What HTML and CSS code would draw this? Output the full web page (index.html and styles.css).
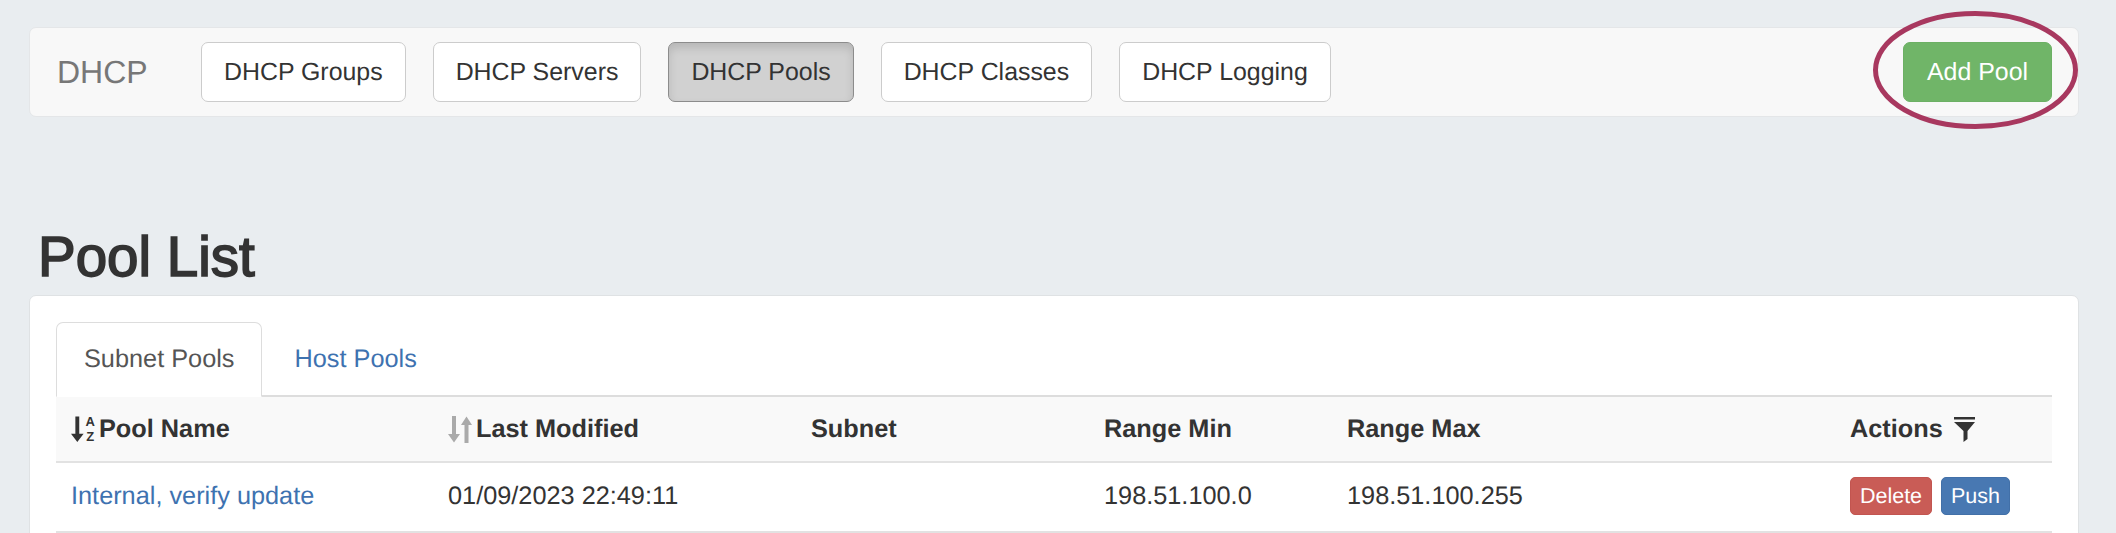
FILE: index.html
```html
<!DOCTYPE html>
<html lang="en">
<head>
    <meta charset="UTF-8">
    <title>DHCP Pools</title>
    <link rel="stylesheet" href="styles.css">
</head>
<body>
    <div class="page">
        <!-- Top nav panel -->
        <nav class="top-panel">
            <span class="panel-label">DHCP</span>
            <div class="panel-buttons">
                <a class="btn">DHCP Groups</a>
                <a class="btn">DHCP Servers</a>
                <a class="btn active">DHCP Pools</a>
                <a class="btn">DHCP Classes</a>
                <a class="btn">DHCP Logging</a>
            </div>
            <div class="add-wrap">
                <a class="btn btn-green">Add Pool</a>
                <svg class="highlight" width="209" height="122" viewBox="0 0 209 122">
                    <ellipse cx="104.5" cy="59" rx="100" ry="56.5" fill="none" stroke="#a8385f" stroke-width="5"/>
                </svg>
            </div>
        </nav>

        <h1 class="page-title">Pool List</h1>

        <section class="card">
            <ul class="tabs">
                <li class="tab current">Subnet Pools</li>
                <li class="tab">Host Pools</li>
            </ul>
            <table class="pool-table">
                <colgroup>
                    <col class="col-name">
                    <col class="col-modified">
                    <col class="col-subnet">
                    <col class="col-min">
                    <col class="col-max">
                    <col class="col-actions">
                </colgroup>
                <thead>
                    <tr>
                        <th>
                            <span class="th-inner">
                                <span class="sort-icon">
                                    <svg width="13" height="27" viewBox="0 0 13 27">
                                        <path d="M4.500 0h4v18h4.500l-6.500 8.500L0 18h4.500z" fill="#333"/>
                                    </svg>
                                    <span class="sort-letters">
                                        <span>A</span>
                                        <span>Z</span>
                                    </span>
                                </span>
                                Pool Name
                            </span>
                        </th>
                        <th>
                            <span class="th-inner">
                                <svg width="24" height="27" viewBox="0 0 24 27">
                                    <path d="M4 0h4v18h4l-6 8.500L0 18h4z" fill="#aaa"/>
                                    <path d="M16.500 27V9H13l5.500-8.500L24 9h-3.500v18z" fill="#aaa"/>
                                </svg>
                                Last Modified
                            </span>
                        </th>
                        <th>Subnet</th>
                        <th>Range Min</th>
                        <th>Range Max</th>
                        <th>
                            <span class="th-inner th-actions">
                                Actions
                                <svg width="21" height="25" viewBox="0 0 21 25">
                                    <path d="M0 0h21v2.500H0z" fill="#333"/>
                                    <path d="M0 5h21l-7.500 9v8l-4 3V14z" fill="#333"/>
                                </svg>
                            </span>
                        </th>
                    </tr>
                </thead>
                <tbody>
                    <tr>
                        <td><a class="link">Internal, verify update</a></td>
                        <td>01/09/2023 22:49:11</td>
                        <td></td>
                        <td>198.51.100.0</td>
                        <td>198.51.100.255</td>
                        <td>
                            <div class="row-actions">
                                <a class="btn-small btn-red">Delete</a>
                                <a class="btn-small btn-blue">Push</a>
                            </div>
                        </td>
                    </tr>
                </tbody>
            </table>
        </section>
    </div>
</body>
</html>
```

FILE: styles.css
```css
/* Reset */
* {
    margin: 0;
    padding: 0;
    box-sizing: border-box;
}

html, body {
    height: 100%;
    overflow: hidden;
}

body {
    background: #e9edf0;
    color: #333;
    font-family: "Liberation Sans", Arial, sans-serif;
    font-size: 25.3px;
    text-rendering: geometricPrecision;
}

.page {
    padding: 27px 37px 0 29px;
}

/* Top panel */
.top-panel {
    display: flex;
    align-items: center;
    height: 90px;
    padding: 0 26px 0 27px;
    background: #f8f8f8;
    border: 1px solid #e4e6e8;
    border-radius: 7px;
}

.panel-label {
    width: 144px;
    font-size: 32px;
    color: #777;
}

.panel-buttons {
    display: flex;
    gap: 27px;
}

.btn {
    display: flex;
    align-items: center;
    justify-content: center;
    height: 60px;
    padding: 0 22px;
    background: #fff;
    border: 1px solid #ccc;
    border-radius: 7px;
    font-size: 24.9px;
    white-space: nowrap;
}

.btn.active {
    background: #d1d1d1;
    border-color: #8c8c8c;
    box-shadow: inset 0 5px 8px rgba(0, 0, 0, 0.125);
}

.btn-green {
    width: 149px;
    background: #70b568;
    border-color: #6cb064;
    color: #fff;
}

.add-wrap {
    position: relative;
    margin-left: auto;
}

/* Hand drawn circle round the button */
.highlight {
    position: absolute;
    left: -32px;
    top: -31px;
}

/* Title */
.page-title {
    margin: 110px 0 0 9px;
    height: 68px;
    line-height: 60px;
    font-size: 56.5px;
    font-weight: normal;
    -webkit-text-stroke: 1.7px #333;
}

/* Card */
.card {
    height: 400px;
    padding: 26px;
    background: #fff;
    border: 1px solid #dfe2e4;
    border-radius: 7px;
}

.tabs {
    display: flex;
    gap: 4px;
    height: 75px;
    list-style: none;
    border-bottom: 2px solid #ddd;
}

.tab {
    display: flex;
    align-items: center;
    height: 75px;
    padding: 0 27px;
    border: 1px solid transparent;
    border-radius: 7px 7px 0 0;
    color: #3e72b0;
}

.tab.current {
    background: #fff;
    border-color: #ddd #ddd #fff;
    color: #555;
}

/* Table */
.pool-table {
    width: 100%;
    table-layout: fixed;
    border-collapse: collapse;
}

.col-name { width: 377px; }
.col-modified { width: 363px; }
.col-subnet { width: 293px; }
.col-min { width: 243px; }
.col-max { width: 503px; }
.col-actions { width: 217px; }

.pool-table th {
    height: 65px;
    padding: 0 15px;
    background: #f9f9f9;
    border-bottom: 2px solid #e2e2e2;
    font-weight: bold;
    text-align: left;
}

.pool-table td {
    height: 70px;
    padding: 0 15px 2px;
    border-bottom: 2px solid #e2e2e2;
}

.th-inner {
    display: flex;
    align-items: center;
    gap: 4px;
}

.th-actions {
    gap: 11px;
}

.sort-icon {
    display: flex;
    align-items: center;
    gap: 2px;
    width: 24px;
}

.sort-letters {
    display: flex;
    flex-direction: column;
    gap: 3px;
    font-size: 13px;
    line-height: 12px;
    text-align: center;
}

.link {
    color: #3e72b0;
}

.row-actions {
    display: flex;
    gap: 9px;
}

.btn-small {
    display: flex;
    align-items: center;
    justify-content: center;
    height: 38px;
    font-size: 21.5px;
    color: #fff;
    border-radius: 5px;
    border: 1px solid transparent;
}

.btn-red {
    width: 82px;
    background: #c95c56;
    border-color: #c25550;
}

.btn-blue {
    width: 69px;
    background: #4878b2;
    border-color: #4270a8;
}
```
